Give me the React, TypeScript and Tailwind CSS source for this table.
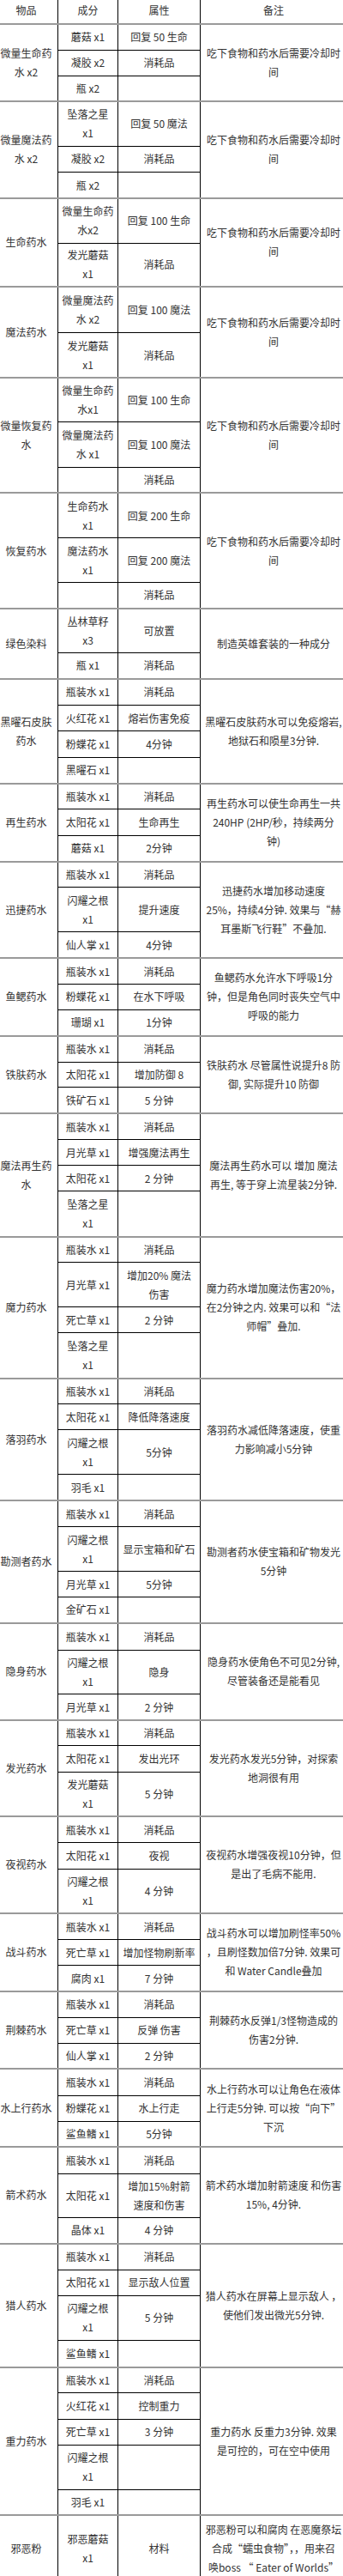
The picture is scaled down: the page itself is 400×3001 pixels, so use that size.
import React from "react";

type Row = { ing: string[]; attr: string[]; h: string };
type Group = { name: string[]; note: string[]; rows: Row[] };

const R = (ing: string | string[], attr: string | string[], h: string): Row => ({
  ing: Array.isArray(ing) ? ing : ing ? [ing] : [],
  attr: Array.isArray(attr) ? attr : attr ? [attr] : [],
  h,
});

const COOL = ["吃下食物和药水后需要冷却时", "间"];

const groups: Group[] = [
  { name: ["微量生命药", "水 x2"], note: COOL, rows: [R("蘑菇 x1", "回复 50 生命", "h-[30.6px]"), R("凝胶 x2", "消耗品", "h-[30px]"), R("瓶 x2", "", "h-[30px]")] },
  { name: ["微量魔法药", "水 x2"], note: COOL, rows: [R(["坠落之星", "x1"], "回复 50 魔法", "h-[52px]"), R("凝胶 x2", "消耗品", "h-[30.7px]"), R("瓶 x2", "", "h-[30px]")] },
  { name: ["生命药水"], note: COOL, rows: [R(["微量生命药", "水x2"], "回复 100 生命", "h-[52.3px]"), R(["发光蘑菇", "x1"], "消耗品", "h-[51px]")] },
  { name: ["魔法药水"], note: COOL, rows: [R(["微量魔法药", "水 x2"], "回复 100 魔法", "h-[53.4px]"), R(["发光蘑菇", "x1"], "消耗品", "h-[52.6px]")] },
  { name: ["微量恢复药", "水"], note: COOL, rows: [R(["微量生命药", "水x1"], "回复 100 生命", "h-[51.4px]"), R(["微量魔法药", "水 x1"], "回复 100 魔法", "h-[52.6px]"), R("", "消耗品", "h-[30px]")] },
  { name: ["恢复药水"], note: COOL, rows: [R(["生命药水", "x1"], "回复 200 生命", "h-[52.7px]"), R(["魔法药水", "x1"], "回复 200 魔法", "h-[51.7px]"), R("", "消耗品", "h-[30.6px]")] },
  { name: ["绿色染料"], note: ["制造英雄套装的一种成分"], rows: [R(["丛林草籽", "x3"], "可放置", "h-[51.7px]"), R("瓶 x1", "消耗品", "h-[30px]")] },
  { name: ["黑曜石皮肤", "药水"], note: ["黑曜石皮肤药水可以免疫熔岩,", "地狱石和陨星3分钟."], rows: [R("瓶装水 x1", "消耗品", "h-[30.7px]"), R("火红花 x1", "熔岩伤害免疫", "h-[30.3px]"), R("粉蝶花 x1", "4分钟", "h-[30.7px]"), R("黑曜石 x1", "", "h-[30.6px]")] },
  { name: ["再生药水"], note: ["再生药水可以使生命再生一共", "240HP (2HP/秒，持续两分", "钟)"], rows: [R("瓶装水 x1", "消耗品", "h-[30px]"), R("太阳花 x1", "生命再生", "h-[30.4px]"), R("蘑菇 x1", "2分钟", "h-[30.6px]")] },
  { name: ["迅捷药水"], note: ["迅捷药水增加移动速度", "25%，持续4分钟. 效果与“赫", "耳墨斯飞行鞋”不叠加."], rows: [R("瓶装水 x1", "消耗品", "h-[30px]"), R(["闪耀之根", "x1"], "提升速度", "h-[51.7px]"), R("仙人掌 x1", "4分钟", "h-[30.7px]")] },
  { name: ["鱼鳃药水"], note: ["鱼鳃药水允许水下呼吸1分", "钟，但是角色同时丧失空气中", "呼吸的能力"], rows: [R("瓶装水 x1", "消耗品", "h-[30px]"), R("粉蝶花 x1", "在水下呼吸", "h-[30px]"), R("珊瑚 x1", "1分钟", "h-[30.3px]")] },
  { name: ["铁肤药水"], note: ["铁肤药水 尽管属性说提升8 防", "御, 实际提升10 防御"], rows: [R("瓶装水 x1", "消耗品", "h-[30.7px]"), R("太阳花 x1", "增加防御 8", "h-[29.3px]"), R("铁矿石 x1", "5 分钟", "h-[30.7px]")] },
  { name: ["魔法再生药", "水"], note: ["魔法再生药水可以 增加 魔法", "再生, 等于穿上流星装2分钟."], rows: [R("瓶装水 x1", "消耗品", "h-[30.6px]"), R("月光草 x1", "增强魔法再生", "h-[30px]"), R("太阳花 x1", "2 分钟", "h-[30px]"), R(["坠落之星", "x1"], "", "h-[52.7px]")] },
  { name: ["魔力药水"], note: ["魔力药水增加魔法伤害20%，", "在2分钟之内. 效果可以和“法", "师帽”叠加."], rows: [R("瓶装水 x1", "消耗品", "h-[30px]"), R("月光草 x1", ["增加20% 魔法", "伤害"], "h-[52.3px]"), R("死亡草 x1", "2 分钟", "h-[30px]"), R(["坠落之星", "x1"], "", "h-[52.7px]")] },
  { name: ["落羽药水"], note: ["落羽药水减低降落速度，使重", "力影响减小5分钟"], rows: [R("瓶装水 x1", "消耗品", "h-[30px]"), R("太阳花 x1", "降低降落速度", "h-[30px]"), R(["闪耀之根", "x1"], "5分钟", "h-[52.3px]"), R("羽毛 x1", "", "h-[30.4px]")] },
  { name: ["勘测者药水"], note: ["勘测者药水使宝箱和矿物发光", "5分钟"], rows: [R("瓶装水 x1", "消耗品", "h-[30.6px]"), R(["闪耀之根", "x1"], "显示宝箱和矿石", "h-[51.7px]"), R("月光草 x1", "5分钟", "h-[30px]"), R("金矿石 x1", "", "h-[30px]")] },
  { name: ["隐身药水"], note: ["隐身药水使角色不可见2分钟,", "尽管装备还是能看见"], rows: [R("瓶装水 x1", "消耗品", "h-[31.7px]"), R(["闪耀之根", "x1"], "隐身", "h-[51.6px]"), R("月光草 x1", "2 分钟", "h-[30px]")] },
  { name: ["发光药水"], note: ["发光药水发光5分钟，对探索", "地洞很有用"], rows: [R("瓶装水 x1", "消耗品", "h-[30px]"), R("太阳花 x1", "发出光环", "h-[30.7px]"), R(["发光蘑菇", "x1"], "5 分钟", "h-[51.7px]")] },
  { name: ["夜视药水"], note: ["夜视药水增强夜视10分钟，但", "是出了毛病不能用."], rows: [R("瓶装水 x1", "消耗品", "h-[30.3px]"), R("太阳花 x1", "夜视", "h-[30.7px]"), R(["闪耀之根", "x1"], "4 分钟", "h-[51.6px]")] },
  { name: ["战斗药水"], note: ["战斗药水可以增加刷怪率50%", "，且刷怪数加倍7分钟. 效果可", "和 Water Candle叠加"], rows: [R("瓶装水 x1", "消耗品", "h-[31px]"), R("死亡草 x1", "增加怪物刷新率", "h-[30px]"), R("腐肉 x1", "7 分钟", "h-[30px]")] },
  { name: ["荆棘药水"], note: ["荆棘药水反弹1/3怪物造成的", "伤害2分钟."], rows: [R("瓶装水 x1", "消耗品", "h-[30.7px]"), R("死亡草 x1", "反弹 伤害", "h-[30px]"), R("仙人掌 x1", "2 分钟", "h-[30px]")] },
  { name: ["水上行药水"], note: ["水上行药水可以让角色在液体", "上行走5分钟. 可以按“向下”", "下沉"], rows: [R("瓶装水 x1", "消耗品", "h-[30.7px]"), R("粉蝶花 x1", "水上行走", "h-[30px]"), R("鲨鱼鳍 x1", "5分钟", "h-[30px]")] },
  { name: ["箭术药水"], note: ["箭术药水增加射箭速度 和伤害", "15%, 4分钟."], rows: [R("瓶装水 x1", "消耗品", "h-[31px]"), R("太阳花 x1", ["增加15%射箭", "速度和伤害"], "h-[51.6px]"), R("晶体 x1", "4 分钟", "h-[30px]")] },
  { name: ["猎人药水"], note: ["猎人药水在屏幕上显示敌人 ，", "使他们发出微光5分钟."], rows: [R("瓶装水 x1", "消耗品", "h-[30.7px]"), R("太阳花 x1", "显示敌人位置", "h-[30px]"), R(["闪耀之根", "x1"], "5 分钟", "h-[52px]"), R("鲨鱼鳍 x1", "", "h-[31.3px]")] },
  { name: ["重力药水"], note: ["重力药水 反重力3分钟. 效果", "是可控的，可在空中使用"], rows: [R("瓶装水 x1", "消耗品", "h-[30px]"), R("火红花 x1", "控制重力", "h-[30.4px]"), R("死亡草 x1", "3 分钟", "h-[30px]"), R(["闪耀之根", "x1"], "", "h-[52.3px]"), R("羽毛 x1", "", "h-[30px]")] },
  { name: ["邪恶粉"], note: ["邪恶粉可以和腐肉 在恶魔祭坛", "合成“蠕虫食物”，，用来召", "唤boss “ Eater of Worlds”"], rows: [R(["邪恶蘑菇", "x1"], "材料", "h-[76px]")] },
];

const Lines = ({ lines }: { lines: string[] }) => (
  <>
    {lines.map((l, i) => (
      <React.Fragment key={i}>
        {i > 0 && <br />}
        {l}
      </React.Fragment>
    ))}
  </>
);

const base =
  "border border-black px-[3px] py-0 text-center align-middle leading-[22px] whitespace-nowrap";
const top = " border-t-2 border-t-[#9a9a9a]";

export default function App() {
  return (
    <div className="w-[400px] min-h-[3001px] overflow-hidden bg-white text-[12px] text-[#333] font-['Noto_Sans_CJK_SC',sans-serif]">
      <table className="table-fixed border-collapse w-[411px] -ml-[7px] -mt-[3px]">
        <colgroup>
          <col className="w-[74px]" />
          <col className="w-[70px]" />
          <col className="w-[96px]" />
          <col className="w-[171px]" />
        </colgroup>
        <thead>
          <tr className="h-[30px]">
            <th className={base + " font-normal"}>物品</th>
            <th className={base + " font-normal"}>成分</th>
            <th className={base + " font-normal"}>属性</th>
            <th className={base + " font-normal"}>备注</th>
          </tr>
        </thead>
        <tbody>
          {groups.map((g, gi) =>
            g.rows.map((r, ri) => {
              const cls = base + (ri === 0 ? top : "");
              return (
                <tr key={gi + "-" + ri} className={r.h}>
                  {ri === 0 && (
                    <td rowSpan={g.rows.length} className={cls}>
                      <Lines lines={g.name} />
                    </td>
                  )}
                  <td className={cls}>
                    <Lines lines={r.ing.length ? r.ing : ["\u00a0"]} />
                  </td>
                  <td className={cls}>
                    <Lines lines={r.attr.length ? r.attr : ["\u00a0"]} />
                  </td>
                  {ri === 0 && (
                    <td rowSpan={g.rows.length} className={cls}>
                      <Lines lines={g.note} />
                    </td>
                  )}
                </tr>
              );
            })
          )}
        </tbody>
      </table>
    </div>
  );
}
